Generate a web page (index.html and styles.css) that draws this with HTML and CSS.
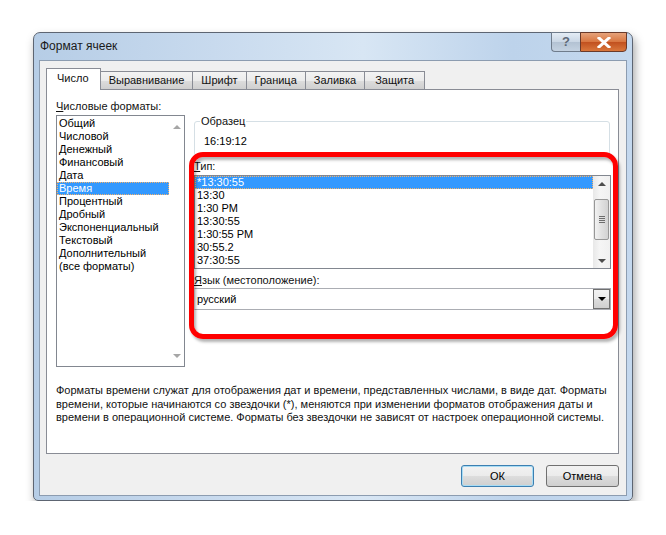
FILE: index.html
```html
<!DOCTYPE html>
<html lang="ru">
<head>
  <meta charset="UTF-8">
  <title>Формат ячеек</title>
  <link rel="stylesheet" href="styles.css">
</head>
<body>

<div class="window">
  <div class="titlebar">
    <span class="title">Формат ячеек</span>
    <div class="caption-btns">
      <div class="cap-help">?</div>
      <div class="cap-close">
        <svg width="14" height="11" viewBox="0 0 14 11"><path d="M2 1 L12 10 M12 1 L2 10" stroke="#fff" stroke-width="3" stroke-linecap="square"/></svg>
      </div>
    </div>
  </div>

  <div class="client">
    <div class="tabs">
      <div class="tab active">Число</div>
      <div class="tab">Выравнивание</div>
      <div class="tab">Шрифт</div>
      <div class="tab">Граница</div>
      <div class="tab">Заливка</div>
      <div class="tab">Защита</div>
    </div>

    <div class="panel">
      <div class="columns">
        <div class="left-col">
          <div class="label"><u>Ч</u>исловые форматы:</div>
          <div class="listbox cat-list">
            <div class="items">
              <div class="item">Общий</div>
              <div class="item">Числовой</div>
              <div class="item">Денежный</div>
              <div class="item">Финансовый</div>
              <div class="item">Дата</div>
              <div class="item selected">Время</div>
              <div class="item">Процентный</div>
              <div class="item">Дробный</div>
              <div class="item">Экспоненциальный</div>
              <div class="item">Текстовый</div>
              <div class="item">Дополнительный</div>
              <div class="item">(все форматы)</div>
            </div>
            <div class="scroll scroll-off">
              <span class="arr-up"></span>
              <span class="arr-down"></span>
            </div>
          </div>
        </div>

        <div class="right-col">
          <div class="sample">
            <span class="sample-title">Образец</span>
            <div class="sample-value">16:19:12</div>
          </div>

          <div class="label"><u>Т</u>ип:</div>
          <div class="listbox type-list">
            <div class="items">
              <div class="item selected">*13:30:55</div>
              <div class="item">13:30</div>
              <div class="item">1:30 PM</div>
              <div class="item">13:30:55</div>
              <div class="item">1:30:55 PM</div>
              <div class="item">30:55.2</div>
              <div class="item">37:30:55</div>
            </div>
            <div class="scroll">
              <span class="arr-up"></span>
              <div class="thumb"><i></i><i></i><i></i><i></i></div>
              <span class="arr-down"></span>
            </div>
          </div>

          <div class="label lang-label"><u>Я</u>зык (местоположение):</div>
          <div class="combo">
            <span>русский</span>
            <div class="combo-btn"><span class="arr-down"></span></div>
          </div>
        </div>
      </div>

      <p class="desc">Форматы времени служат для отображения дат и времени, представленных числами, в виде дат. Форматы<br>
      времени, которые начинаются со звездочки (*), меняются при изменении форматов отображения даты и<br>
      времени в операционной системе. Форматы без звездочки не зависят от настроек операционной системы.</p>

      <!-- annotation drawn over the dialog -->
      <div class="highlight"></div>
    </div>

    <div class="buttons">
      <button class="btn btn-default">ОК</button>
      <button class="btn">Отмена</button>
    </div>
  </div>
</div>

</body>
</html>
```

FILE: styles.css
```css
body {
  margin: 0;
  background: #fff;
  font-family: "Liberation Sans", Arial, sans-serif;
  font-size: 11px;
  color: #000;
}

.window {
  position: relative;
  box-sizing: border-box;
  width: 600px;
  height: 469px;
  margin: 32px 0 0 33px;
  padding: 0 5px 4px 5px;
  display: flex;
  flex-direction: column;
  border: 1px solid #5d6572;
  border-radius: 7px 7px 5px 5px;
  background: linear-gradient(to right, #b6cde6 0%, #c8daee 30%, #d8e6f4 55%, #bdd3eb 80%, #c4d8ee 100%);
  box-shadow: 2px 5px 10px rgba(0, 0, 0, 0.35);
}

.titlebar {
  height: 28px;
  display: flex;
  align-items: center;
}

.title {
  padding-left: 1px;
  padding-bottom: 1px;
  font-size: 12px;
  color: #1a1a1a;
}

.caption-btns {
  position: absolute;
  top: -1px;
  right: 5px;
  display: flex;
}

.cap-help {
  width: 28px;
  height: 18px;
  border: 1px solid #6f7c8c;
  border-right: none;
  border-radius: 0 0 0 4px;
  background: linear-gradient(#e4ecf5, #c9d6e4 50%, #b3c2d3 51%, #c4d2e1);
  color: #5d6876;
  font-weight: bold;
  font-size: 13px;
  text-align: center;
  line-height: 18px;
}

.cap-close {
  width: 45px;
  height: 18px;
  border: 1px solid #6a3a2a;
  border-radius: 0 0 4px 0;
  background: linear-gradient(#e6a27a, #d8753f 50%, #c1501f 51%, #d9773c);
  display: flex;
  align-items: center;
  justify-content: center;
}

.client {
  flex: 1;
  display: flex;
  flex-direction: column;
  padding: 7px 7px 8px 6px;
  border: 1px solid #8c9cb0;
  background: #f0f0f0;
}

.tabs {
  display: flex;
  align-items: flex-end;
  height: 21px;
}

.tab {
  box-sizing: border-box;
  height: 18px;
  padding: 0 8px;
  margin-right: -1px;
  border: 1px solid #898c95;
  border-bottom: none;
  background: linear-gradient(#f3f3f3, #ebebeb 50%, #dddddd 51%, #cfcfcf);
  line-height: 17px;
  color: #111;
}

.tab:last-child {
  padding: 0 10px;
}

.tab.active {
  position: relative;
  z-index: 1;
  height: 22px;
  margin-bottom: -1px;
  padding: 0 11px 0 10px;
  background: #fff;
  line-height: 19px;
}

.panel {
  position: relative;
  height: 365px;
  box-sizing: border-box;
  padding: 10px 7px 0 9px;
  border: 1px solid #898c95;
  background: #fff;
}

.columns {
  display: flex;
  gap: 9px;
}

.left-col {
  width: 129px;
}

.right-col {
  flex: 1;
  padding-top: 21px;
}

.label {
  height: 15px;
  line-height: 13px;
  color: #111;
}

.listbox {
  display: flex;
  box-sizing: border-box;
  border: 1px solid #828790;
  background: #fff;
}

.listbox .items {
  flex: 1;
  padding: 1px 0 0 0;
}

.item {
  height: 13px;
  line-height: 13px;
  padding-left: 2px;
  white-space: nowrap;
}

.item.selected {
  background: #3399ff;
  color: #fff;
  outline: 1px dotted #f6b26b;
  outline-offset: -1px;
}

.cat-list {
  height: 252px;
}

.type-list {
  height: 94px;
}

.type-list .items {
  padding-top: 0;
}

.scroll {
  width: 17px;
  display: flex;
  flex-direction: column;
  align-items: center;
  justify-content: space-between;
  padding: 6px 0 5px;
  box-sizing: border-box;
  background: linear-gradient(to right, #e8e8e8, #f5f5f5 40%, #f0f0f0);
}

.scroll-off {
  width: 15px;
  background: #fff;
  padding: 9px 0 8px;
}

.arr-up,
.arr-down {
  width: 0;
  height: 0;
  border-left: 4px solid transparent;
  border-right: 4px solid transparent;
}

.arr-up {
  border-bottom: 4px solid #4d4d4d;
}

.arr-down {
  border-top: 4px solid #4d4d4d;
}

.scroll-off .arr-up {
  border-bottom-color: #a6a6a6;
}

.scroll-off .arr-down {
  border-top-color: #a6a6a6;
}

.thumb {
  box-sizing: border-box;
  width: 15px;
  height: 41px;
  margin-top: -1px;
  margin-bottom: 5px;
  border: 1px solid #979797;
  border-radius: 2px;
  background: linear-gradient(to right, #f2f2f2, #e0e0e0 50%, #d2d2d2);
  display: flex;
  flex-direction: column;
  align-items: center;
  justify-content: center;
  gap: 1px;
}

.thumb i {
  display: block;
  width: 6px;
  height: 1px;
  background: #6c6c6c;
}

.sample {
  position: relative;
  height: 35px;
  box-sizing: border-box;
  margin-right: 1px;
  margin-bottom: 4px;
  border: 1px solid #d5dfe5;
  border-radius: 3px;
}

.sample-title {
  position: absolute;
  top: -7px;
  left: 5px;
  padding: 0 1px;
  background: #fff;
  line-height: 13px;
  color: #111;
}

.sample-value {
  padding: 13px 0 0 9px;
  line-height: 13px;
}

.lang-label {
  margin-top: 5px;
  height: 14px;
}

.combo {
  display: flex;
  align-items: center;
  justify-content: space-between;
  box-sizing: border-box;
  height: 22px;
  padding: 0 0 0 2px;
  border: 1px solid #abadb3;
  border-left-color: #e3e3e3;
  background: #fff;
}

.combo-btn {
  box-sizing: border-box;
  width: 17px;
  height: 20px;
  border: 1px solid #707070;
  background: linear-gradient(#f2f2f2, #ebebeb 50%, #dddddd 51%, #cfcfcf);
  display: flex;
  align-items: center;
  justify-content: center;
}

.combo-btn .arr-down {
  border-top: 4px solid #000;
}

.desc {
  margin: 17px 0 0;
  line-height: 13.5px;
  color: #111;
}

.highlight {
  position: absolute;
  left: 142px;
  top: 62px;
  width: 429px;
  height: 187px;
  box-sizing: border-box;
  border: 5px solid #ff0000;
  border-radius: 14px;
  box-shadow: 2px 3px 3px rgba(0, 0, 0, 0.3), inset 2px 3px 3px rgba(0, 0, 0, 0.3);
}

.buttons {
  display: flex;
  justify-content: flex-end;
  gap: 12px;
  margin-top: 11px;
}

.btn {
  width: 73px;
  height: 22px;
  border: 1px solid #707070;
  border-radius: 3px;
  background: linear-gradient(#f2f2f2, #ebebeb 50%, #dddddd 51%, #cfcfcf);
  font-family: inherit;
  font-size: 11px;
  color: #000;
  padding: 0;
}

.btn-default {
  border-color: #3c7fb1;
  box-shadow: inset 0 0 0 1px #a8dcf4;
}
```
